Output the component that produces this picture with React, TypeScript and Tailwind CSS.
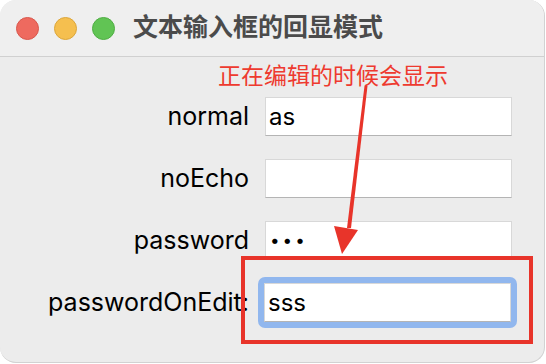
import React from "react"

const font = { fontFamily: '"Inter", "Liberation Sans", "Noto Sans CJK SC", sans-serif' }

const rows = [
  { label: "normal", value: "as" },
  { label: "noEcho", value: "" },
  { label: "password", value: "•••", dots: true },
  { label: "passwordOnEdit:", value: "sss", focused: true },
]

function Field({ value, focused, dots }: { value: string; focused?: boolean; dots?: boolean }) {
  const box = (
    <div className="w-[247px] h-[39px] bg-white border border-[#d8d8d8] border-b-[#b4b4b4] flex items-center pl-[3px] text-[24px] text-black leading-none">
      {dots ? <span className="text-[17px] tracking-[3px] pl-[1px]">{value}</span> : value}
    </div>
  )
  if (!focused) return box
  return <div className="-m-[7px] p-[6px] rounded-[7px] bg-[#91b7ee]">{box}</div>
}

export default function App() {
  return (
    <div className="w-[546px] h-[364px] bg-white" style={font}>
      <div className="relative w-[545px] h-[363px] rounded-[16px] overflow-hidden bg-[#ececec] border-r border-b border-[#d2d2d2]">
        <div className="h-[57px] bg-[#efefef] border-b border-[#d0d0d0] flex items-center pl-[16px]">
          <div className="flex gap-[15px]">
            <span className="w-[23px] h-[23px] rounded-full bg-[#ee6a5f] border border-[#d9574c]" />
            <span className="w-[23px] h-[23px] rounded-full bg-[#f5bf4f] border border-[#dca63a]" />
            <span className="w-[23px] h-[23px] rounded-full bg-[#61c454] border border-[#4fae43]" />
          </div>
          <div className="ml-[18px] text-[25px] font-bold text-[#4b4b4b]">文本输入框的回显模式</div>
        </div>

        <div className="pt-[4px] pl-[218px] text-[23px] leading-[30px] text-[#ee3a2f]">正在编辑的时候会显示</div>

        <div className="mt-[6px] flex flex-col gap-[23px]">
          {rows.map((r) => (
            <div key={r.label} className="flex items-center h-[39px]">
              <div className="w-[249px] text-right text-[25px] text-black leading-none whitespace-nowrap">{r.label}</div>
              <div className="ml-[16px]">
                <Field value={r.value} focused={r.focused} dots={r.dots} />
              </div>
            </div>
          ))}
        </div>

        {/* annotation overlay */}
        <div className="absolute left-[241px] top-[256px] w-[292px] h-[88px] border-[4px] border-[#e8342a]" />
        <svg className="absolute left-0 top-0" width="546" height="364" viewBox="0 0 546 364">
          <polygon points="364.5,86 367.5,86 351,228 347,228" fill="#e8342a" />
          <polygon points="334,226 358,230 342,254" fill="#e8342a" />
        </svg>
      </div>
    </div>
  )
}
